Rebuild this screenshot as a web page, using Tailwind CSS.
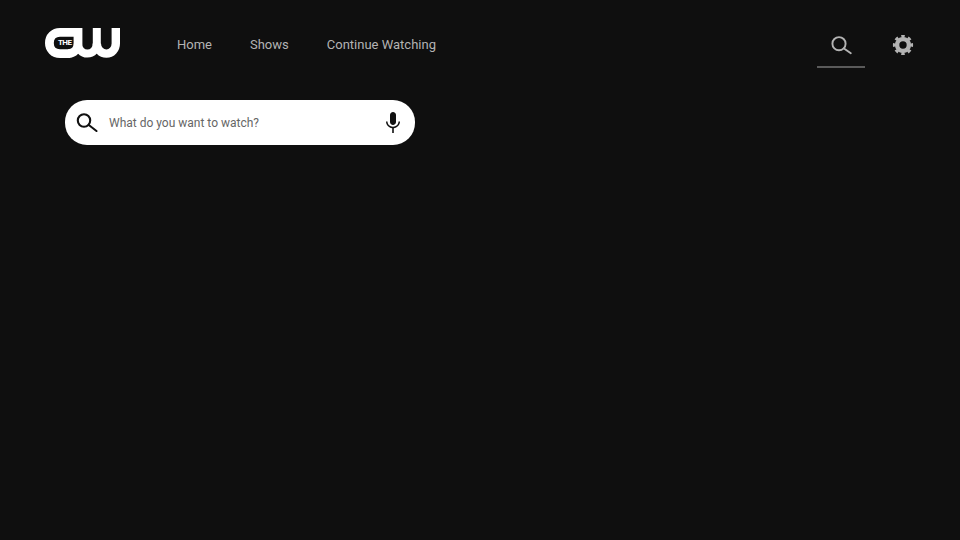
<!DOCTYPE html>
<html>
<head>
<meta charset="utf-8">
<script src="https://cdn.jsdelivr.net/npm/@tailwindcss/browser@4"></script>
</head>
<body class="m-0 w-[960px] h-[540px] overflow-hidden bg-[#0f0f0f] font-['Roboto',sans-serif]">
<header class="flex items-start h-[100px] pl-[45px] pr-[45px]">
  <div class="relative w-[76px] h-[32px] mt-[27px] shrink-0">
    <svg width="76" height="32" viewBox="45 27 76 32" fill="none" stroke="#fff" stroke-width="8.800">
      <path d="M78 32.400H60C53.800 32.400 49.400 37 49.400 43S53.800 53.600 60 53.600H70"/>
      <path d="M78 28V43C78 49 74 53.600 68 53.600"/>
      <path d="M78 43C78 49 82 53.600 87.400 53.600S96.800 49 96.800 43.500V28" stroke-width="8"/>
      <path d="M96.800 43.500C96.800 49 101 53.600 106.400 53.600S115.800 49 115.800 43.500V28" stroke-width="8.400"/>
    </svg>
    <span class="absolute left-[13px] top-[11px] text-[8px] leading-[10px] tracking-[-0.6px] font-bold text-white font-['Roboto',sans-serif]">THE</span>
  </div>
  <nav class="flex gap-[38px] ml-[56px] mt-[36px] text-[13px] leading-[18px] text-[#b3b3b3]">
    <span>Home</span>
    <span>Shows</span>
    <span>Continue Watching</span>
  </nav>
  <div class="ml-auto flex items-start gap-[26px] mt-[23px]">
    <div class="w-[48px] h-[45px] flex justify-center border-b-2 border-[#5a5a5a] pt-[10px]">
      <svg width="24" height="24" viewBox="0 0 24 24" fill="none" stroke="#b3b3b3" stroke-width="1.900"><circle cx="10" cy="10.700" r="6.600"/><path d="M15 15.500L21.800 20.300" stroke-linecap="round"/></svg>
    </div>
    <div class="pt-[10px]">
      <svg width="24" height="24" viewBox="0 0 24 24" fill="none" stroke="#b3b3b3"><circle cx="12" cy="12" r="5.900" stroke-width="4.400"/><circle cx="12" cy="12" r="8.600" stroke-width="3" pathLength="80" stroke-dasharray="5 5" stroke-dashoffset="2.500"/></svg>
    </div>
  </div>
</header>
<main class="pl-[65px]">
  <div class="flex items-center w-[350px] h-[45px] bg-white rounded-[22px] pl-[10px] pr-[10px]">
    <svg class="shrink-0" width="24" height="24" viewBox="0 0 24 24" fill="none" stroke="#111" stroke-width="2.100"><circle cx="9" cy="9.500" r="6.200"/><path d="M13.800 14L21.500 20" stroke-linecap="round"/></svg>
    <span class="ml-[10px] text-[12px] leading-[16px] text-[#666666]">What do you want to watch?</span>
    <svg class="ml-auto shrink-0" width="24" height="24" viewBox="0 0 24 24" fill="#111"><path d="M12 14c1.660 0 3-1.340 3-3V4c0-1.660-1.340-3-3-3S9 2.340 9 4v7c0 1.660 1.340 3 3 3z"/><path d="M17.500 10.500c0 3.100-2.500 5.200-5.500 5.200s-5.500-2.100-5.500-5.200H5c0 3.500 2.800 6.300 6.200 6.700V22h1.600v-4.800c3.400-.4 6.200-3.200 6.200-6.700z"/></svg>
  </div>
</main>
</body>
</html>
